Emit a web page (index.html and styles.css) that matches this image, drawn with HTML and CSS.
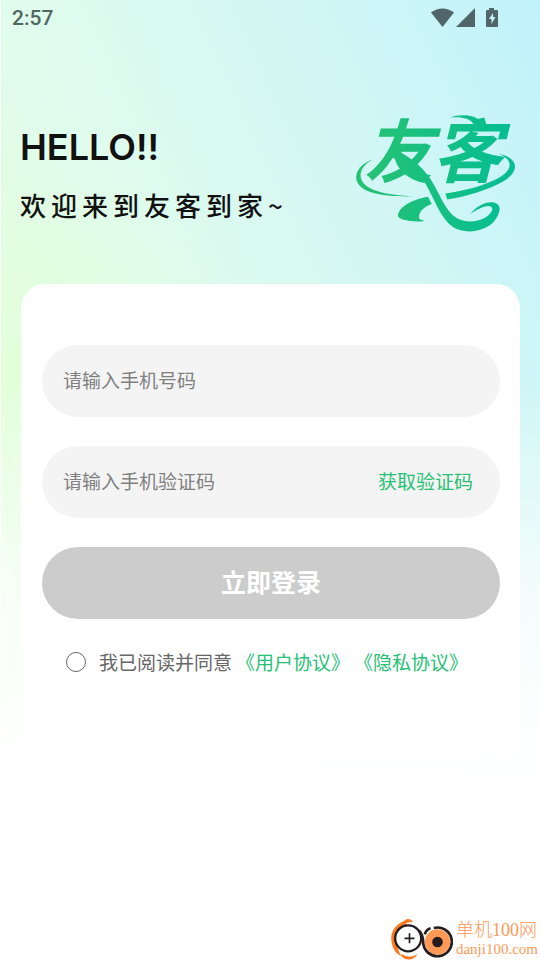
FILE: index.html
```html
<!DOCTYPE html>
<html lang="zh-CN">
<head>
<meta charset="utf-8">
<meta name="viewport" content="width=device-width, initial-scale=1">
<title>友客到家</title>
<link rel="stylesheet" href="styles.css">
</head>
<body>
<div class="status">
  <span class="time">2:57</span>
  <svg class="status-icons" viewBox="0 0 68 20" aria-hidden="true">
    <path d="M0 4.500Q11.500-3.500 23 4.500L11.500 19z"/>
    <path d="M25 19L44 0V19z"/>
    <path fill-rule="evenodd" d="M58 0h5v2h3q1 0 1 1v15q0 1-1 1H56q-1 0-1-1V3q0-1 1-1h2zM62 5l-4 6h2.500v5l4-7H62z"/>
  </svg>
</div>
<header class="hero">
  <div class="greeting">
    <h1>HELLO!!</h1>
    <p>欢迎来到友客到家~</p>
  </div>
  <svg class="logo" viewBox="45 45 480 352" role="img" aria-label="友客">
    <defs>
      <linearGradient id="brand" gradientUnits="userSpaceOnUse" x1="80" y1="0" x2="490" y2="0">
        <stop offset="0" stop-color="#26c174"/><stop offset="1" stop-color="#06be91"/>
      </linearGradient>
    </defs>
    <g fill="url(#brand)">
      <text class="logo-text" x="72" y="232">友</text>
      <text class="logo-text" x="278" y="232">客</text>
      <path d="M98 178C40 200 26 253 90 277C128 289 180 291 222 290C150 287 95 275 75 255C50 230 60 200 98 178z"/>
      <path d="M476 161C540 175 540 215 490 245C440 272 380 290 322 299L316 281C380 272 440 255 480 232C520 208 520 180 476 161z"/>
      <path d="M172 152C215 175 245 200 270 235C300 280 312 330 350 355C388 378 450 360 458 328C455 310 425 320 391 343C410 318 440 304 462 308C490 315 480 345 460 368C430 400 370 402 340 383C300 355 285 300 258 255C235 218 200 190 154 172z"/>
      <path d="M264 291L275 313C250 322 232 340 238 358L255 365C220 366 180 362 174 350C172 325 215 298 264 291z"/>
      <path d="M330 53C360 42 410 42 424 68C418 78 400 76 396 66C385 55 360 50 330 53z"/>
    </g>
  </svg>
</header>
<main class="card">
  <form class="login">
    <div class="field">
      <input type="tel" aria-label="手机号码" placeholder="请输入手机号码">
    </div>
    <div class="field">
      <input type="text" aria-label="手机验证码" placeholder="请输入手机验证码">
      <button class="code" type="button">获取验证码</button>
    </div>
    <button class="submit" type="submit">立即登录</button>
    <div class="terms">
      <input type="radio" id="agree">
      <label for="agree">我已阅读并同意</label>
      <span class="links"><a href="#user">《用户协议》</a><a href="#privacy">《隐私协议》</a></span>
    </div>
  </form>
</main>
<footer class="source">
  <svg class="source-icon" viewBox="0 0 188 126" aria-hidden="true">
    <path d="M40 10C8 24-2 52 6 80C12 100 22 110 33 113Q17 86 21 61Q26 34 50 20z" fill="#ff781f"/>
    <path d="M36 16C44 0 60-2 69 12Q52 10 36 24zM33 108Q60 124 82 108C72 128 46 130 33 114z" fill="#ff781f"/>
    <circle cx="54" cy="61" r="39" fill="#fff" stroke="#231c20" stroke-width="7"/>
    <path d="M58 46V76M43 61H73" stroke="#231c20" stroke-width="5"/>
    <circle cx="142" cy="72" r="38" fill="#ff9955"/>
    <path d="M131 30A43 43 0 1 1 99 74Q100 54 87 38" fill="none" stroke="#231c20" stroke-width="8"/>
    <path d="M104 49Q108 35 121 31" fill="none" stroke="#231c20" stroke-width="8"/>
    <circle cx="142" cy="72" r="16" fill="#231c20"/>
  </svg>
  <div class="source-text"><span class="source-name">单机100网</span><span class="source-url">danji100.com</span></div>
</footer>
</body>
</html>
```
FILE: styles.css
```css
* {
  box-sizing: border-box;
}

body {
  margin: 0;
  min-height: 100vh;
  display: flex;
  flex-direction: column;
  font-family: "Noto Sans CJK SC", sans-serif;
  border-left: 1px solid #fff;
  background:
    linear-gradient(to bottom, rgba(255, 255, 255, 0) 380px, rgba(255, 255, 255, 0.75) 600px, #fff 780px),
    radial-gradient(circle at 0 400px, #e2ffda 0, rgba(226, 255, 218, 0) 260px),
    linear-gradient(65deg, #e2fde2 32%, #e0fcec 45%, #d8f8f1 64%, #cbf5f8 86%, #c0f2fb 100%);
}

button,
input {
  font: inherit;
  border: 0;
  margin: 0;
  padding: 0;
}

.status {
  display: flex;
  align-items: center;
  justify-content: space-between;
  height: 36px;
  padding: 0 41px 0 11px;
  color: #526762;
}

.time {
  font: 500 21px/24px Roboto, sans-serif;
}

.status-icons {
  width: 68px;
  height: 20px;
  fill: #50666a;
}

.hero {
  display: flex;
  justify-content: space-between;
  align-items: flex-start;
  padding: 79px 25px 52px 19px;
}

.greeting {
  padding-top: 12px;
  color: #111;
}

.greeting h1 {
  margin: 0;
  font: 600 36px/40px Inter, sans-serif;
}

.greeting p {
  margin: 18px 0 0;
  font-size: 26px;
  font-weight: 500;
  line-height: 40px;
  letter-spacing: 5px;
  white-space: nowrap;
}

.logo {
  width: 160px;
  height: 117px;
  overflow: visible;
}

.logo-text {
  font-size: 208px;
  font-weight: 700;
  font-style: italic;
}

.card {
  margin: 0 20px;
  padding: 61px 20px 80px 21px;
  border-radius: 24px 24px 0 0;
  background: #fff;
}

.login {
  display: flex;
  flex-direction: column;
  gap: 29px;
}

.field {
  display: flex;
  align-items: center;
  height: 72px;
  padding: 0 27px 4px 21px;
  border-radius: 36px;
  background: #f4f4f4;
  font-size: 19px;
}

.field input {
  flex: 1;
  min-width: 0;
  height: 40px;
  background: none;
  outline: 0;
}

.field input::placeholder {
  color: #808080;
}

.code {
  background: none;
  color: #26c174;
}

.submit {
  height: 72px;
  padding-bottom: 4px;
  border-radius: 36px;
  background: #ccc;
  color: #fff;
  font-size: 25px;
  font-weight: 700;
}

.terms {
  display: flex;
  align-items: center;
  padding-left: 24px;
  font-size: 19px;
  line-height: 28px;
  color: #666;
  white-space: nowrap;
}

.terms input {
  appearance: none;
  width: 20px;
  height: 20px;
  margin-right: 13px;
  border: 1px solid #666;
  border-radius: 50%;
}

.terms input:checked {
  background: #26c174;
}

.links {
  display: flex;
  gap: 4px;
  margin-left: 4px;
}

.links a {
  color: #26c174;
  text-decoration: none;
}

.source {
  display: flex;
  justify-content: flex-end;
  align-items: center;
  gap: 3px;
  margin-top: auto;
  padding: 0 2px 0 0;
  color: #ff9955;
}

.source-icon {
  width: 63px;
  height: 42px;
}

.source-text {
  display: flex;
  flex-direction: column;
  font-family: "Liberation Serif", "Noto Sans CJK SC", serif;
}

.source-name {
  font-size: 18px;
  line-height: 20px;
  font-weight: 300;
}

.source-url {
  font-size: 15px;
  line-height: 18px;
}
```
